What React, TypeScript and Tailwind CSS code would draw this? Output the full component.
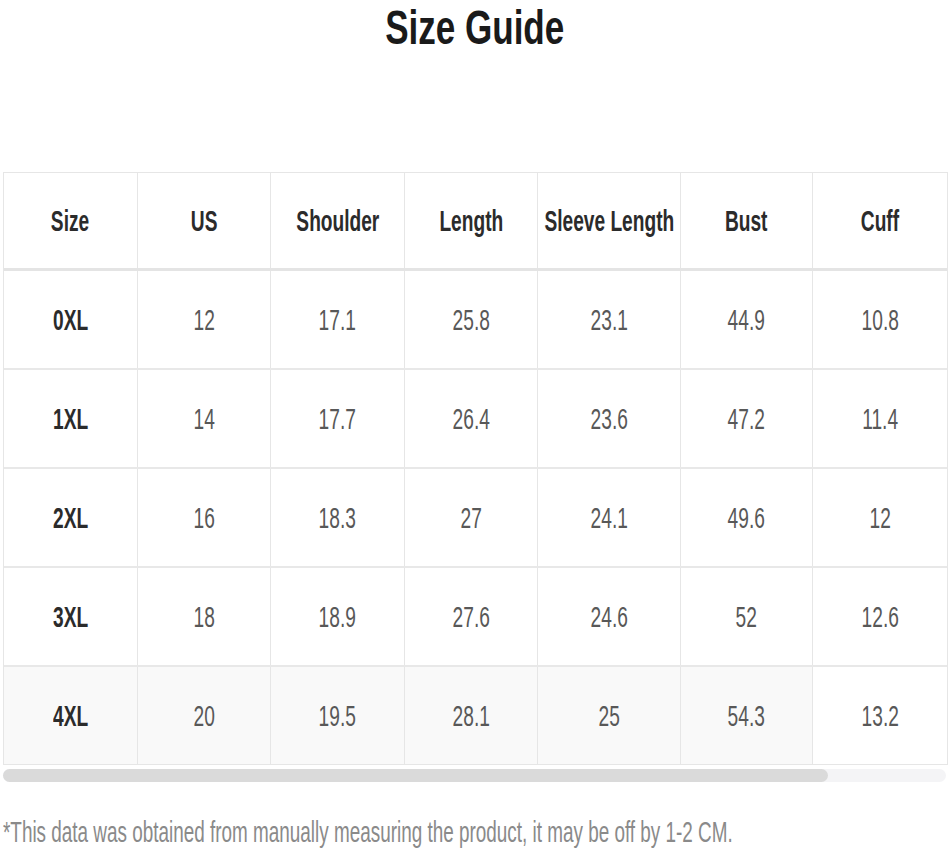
import React from "react";

const headers = ["Size", "US", "Shoulder", "Length", "Sleeve Length", "Bust", "Cuff"];
const rows = [
  ["0XL", "12", "17.1", "25.8", "23.1", "44.9", "10.8"],
  ["1XL", "14", "17.7", "26.4", "23.6", "47.2", "11.4"],
  ["2XL", "16", "18.3", "27", "24.1", "49.6", "12"],
  ["3XL", "18", "18.9", "27.6", "24.6", "52", "12.6"],
  ["4XL", "20", "19.5", "28.1", "25", "54.3", "13.2"],
];

const grid = "grid grid-cols-[134px_133px_134px_133px_143px_132px_134px]";

function Cell({ children, strong, last, shade }: { children: React.ReactNode; strong?: boolean; last?: boolean; shade?: boolean }) {
  return (
    <div
      className={
        "flex items-center justify-center " +
        (last ? "" : "border-r border-[#e6e6e6] ") +
        (shade ? "bg-[#f9f9f9] " : "bg-white ")
      }
    >
      <span
        className={
          "inline-block scale-x-[0.66] whitespace-nowrap text-[29px] leading-[34px] " +
          (strong ? "font-bold text-[#2b2b2b]" : "text-[#585858]")
        }
      >
        {children}
      </span>
    </div>
  );
}

export default function App() {
  return (
    <div className="w-[950px] h-[857px] bg-white overflow-hidden font-['Liberation_Sans',Arial,sans-serif]">
      <div className="flex justify-center">
        <h1 className="inline-block scale-x-[0.73] text-[48px] leading-[56px] font-bold text-[#1a1a1a] whitespace-nowrap">
          Size Guide
        </h1>
      </div>
      <div className="ml-[3px] mt-[116px] w-[945px]">
        <div className="border border-[#e6e6e6]">
          <div className={grid + " h-[98px] border-b-[3px] border-[#e4e4e4]"}>
            {headers.map((h, i) => (
              <Cell key={h} strong last={i === headers.length - 1}>
                {h}
              </Cell>
            ))}
          </div>
          {rows.map((r, ri) => (
            <div
              key={r[0]}
              className={
                grid +
                (ri === rows.length - 1 ? " h-[97px]" : " h-[99px] border-b-2 border-[#e8e8e8]")
              }
            >
              {r.map((c, i) => (
                <Cell key={i} strong={i === 0} last={i === r.length - 1} shade={ri === rows.length - 1 && i !== r.length - 1}>
                  {c}
                </Cell>
              ))}
            </div>
          ))}
        </div>
        <div className="mt-[4px] h-[13px] w-[943px] rounded-full bg-[#f4f4f6]">
          <div className="h-[13px] w-[825px] rounded-full bg-[#dadada]" />
        </div>
      </div>
      <p className="ml-[3px] mt-[32px] origin-left scale-x-[0.63] whitespace-nowrap text-[30px] leading-[36px] text-[#8a8a8a]">
        *This data was obtained from manually measuring the product, it may be off by 1-2 CM.
      </p>
    </div>
  );
}
